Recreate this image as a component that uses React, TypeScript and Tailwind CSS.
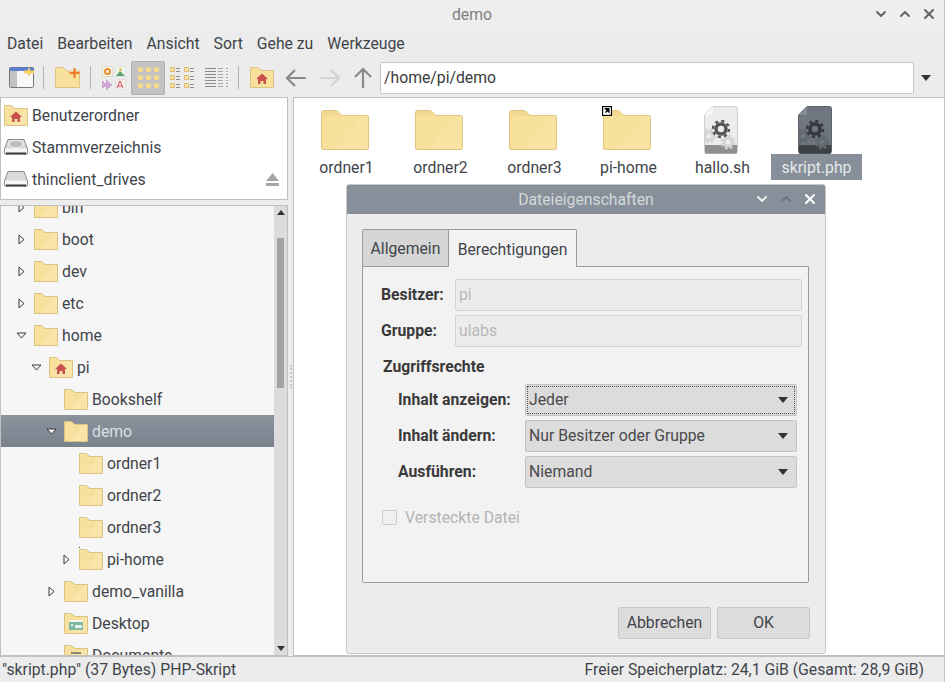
import { ChevronDown, ChevronUp, X } from "lucide-react";

const font = "font-['Roboto',sans-serif]";

function Folder({ className = "w-12 h-10" }: { className?: string }) {
  return (
    <svg viewBox="0 0 48 40" className={className}>
      <path d="M.5 6 V2.500 Q.5 .5 2.500 .5 H14 Q16 .5 18 2.500 L21 5.500 H46 Q47.500 5.500 47.500 7 V38 Q47.500 39.500 46 39.500 H2 Q.5 39.500 .5 38 Z" fill="#f6e09a" stroke="#e0c584" />
      <path d="M1 5.500 V2.500 Q1 1 2.500 1 H14 L20 5.500 Z" fill="#f1d88e" />
      <path d="M12 39 L42 6 H47 V38 Q47 39 46 39 Z" fill="#f8e3a2" />
    </svg>
  );
}

function TreeFolder({ kind }: { kind?: string }) {
  return (
    <svg viewBox="0 0 24 21" className="h-[21px] w-6 shrink-0 overflow-visible">
      <path d="M.5 .5 H7 L11 3.500 H23.500 V20.500 H.5 Z" fill="#f7e19c" stroke="#dcc285" />
      <path d="M6 20 L20 4 H23 V20 Z" fill="#f9e5a9" />
      {kind === "home" && <path d="M12 6.500 L18 12 H16 V17 H13.500 V14 H10.500 V17 H8 V12 H6 Z" fill="#c9504f" />}
      {kind === "link" && <rect x="0" y="-2" width="1" height="1" fill="#444" />}
      {kind === "desktop" && (
        <g>
          <rect x="5" y="7" width="14" height="10" fill="#f4f4f0" />
          <rect x="5" y="9" width="14" height="8" fill="#7fb8a0" />
          <rect x="11" y="12" width="7" height="3" fill="#e8f0ec" />
          <rect x="7" y="11" width="2" height="2" fill="#e8f0ec" />
        </g>
      )}
      {kind === "docs" && (
        <g fill="#8a8a7a">
          <rect x="7" y="7" width="10" height="2" />
          <rect x="7" y="11" width="10" height="2" />
        </g>
      )}
    </svg>
  );
}

function DocIcon({ dark }: { dark?: boolean }) {
  const body = dark ? "#6f7680" : "#ececec";
  const edge = dark ? "#5d636b" : "#cfcfcf";
  const gear = dark ? "#34373c" : "#555555";
  const soft = dark ? "#62686f" : "#d4d4d4";
  const band = dark ? "#3d4045" : "#8f8f8f";
  return (
    <svg viewBox="0 0 34 48" className="h-12 w-[34px]">
      <path d="M.5 9 L9 .5 H31.500 Q33.500 .5 33.500 2.500 V45 Q33.500 47.500 31 47.500 H3 Q.5 47.500 .5 45 Z" fill={body} stroke={edge} />
      <path d="M1 9 L9 1 V9 Z" fill={dark ? "#868c94" : "#f8f8f8"} />
      <rect x="1" y="39" width="32" height="8.500" fill={band} />
      <circle cx="5" cy="30" r="4" fill="none" stroke={soft} strokeWidth="3" />
      <circle cx="5" cy="30" r="6.500" fill="none" stroke={soft} strokeWidth="2" strokeDasharray="3 2.100" />
      <circle cx="24" cy="36" r="4" fill="none" stroke={soft} strokeWidth="3" />
      <circle cx="24" cy="36" r="6.500" fill="none" stroke={soft} strokeWidth="2" strokeDasharray="3 2.100" />
      <circle cx="17" cy="23" r="5" fill="none" stroke={gear} strokeWidth="3.500" />
      <circle cx="17" cy="23" r="8" fill="none" stroke={gear} strokeWidth="2.500" strokeDasharray="3.100 3.180" />
    </svg>
  );
}

function Disk({ lined }: { lined?: boolean }) {
  return (
    <svg viewBox="0 0 24 18" className="h-[18px] w-6">
      <path d="M4 1.500 H20 L23.500 11 V15 Q23.500 16.500 22 16.500 H2 Q.5 16.500 .5 15 V11 Z" fill="#dadada" stroke="#8a8a8a" />
      <rect x="1" y="10.500" width="22" height="4" fill="#f6f6f6" />
      <rect x="2" y="14.500" width="20" height="1.500" fill="#3c3c3c" />
      {lined && <ellipse cx="12" cy="6" rx="7" ry="3.500" fill="#bcbcbc" stroke="#eeeeee" />}
    </svg>
  );
}

function Triangle({ dir, selected }: { dir: "right" | "down"; selected?: boolean }) {
  return dir === "right" ? (
    <svg viewBox="0 0 7 11" className="h-[11px] w-[7px]">
      <path d="M1 1 L6 5.500 L1 10 Z" fill="#f6f6f6" stroke="#3a3a3a" />
    </svg>
  ) : (
    <svg viewBox="0 0 11 7" className="h-[7px] w-[11px]">
      <path d="M1 1 H10 L5.500 6 Z" fill={selected ? "#ffffff" : "#f6f6f6"} stroke={selected ? "#33373c" : "#3a3a3a"} />
    </svg>
  );
}

function ToolIcons({ name }: { name: string }) {
  if (name === "panel") {
    return (
      <svg viewBox="0 0 25 21" className="h-[21px] w-[25px]">
        <rect x=".5" y=".5" width="24" height="20" rx="1" fill="#f8f8f8" stroke="#777" />
        <rect x="1" y="1" width="7" height="19" fill="#c4c4c4" />
        <rect x=".5" y=".5" width="24" height="3.500" fill="#5a7fd0" />
        <path d="M20 0 L21.500 3.500 H25 V6.500 H21.500 L20 10 L18.500 6.500 H15 V3.500 H18.500 Z" fill="#f5d263" />
      </svg>
    );
  }
  if (name === "newfolder") {
    return (
      <svg viewBox="0 0 25 21" className="h-[21px] w-[25px]">
        <path d="M.5 .5 H8 L12 4 H24.500 V20.500 H.5 Z" fill="#f7e19c" stroke="#dcc285" />
        <path d="M18.500 1 H20.500 V5 H24.500 V7 H20.500 V11 H18.500 V7 H14.500 V5 H18.500 Z" fill="#ea7d27" />
      </svg>
    );
  }
  if (name === "thumbs") {
    return (
      <svg viewBox="0 0 24 24" className="h-6 w-6">
        <rect x=".5" y=".5" width="10" height="10" fill="#fdf6ea" stroke="#e3d8c8" />
        <circle cx="5.500" cy="5.500" r="3.500" fill="#e98a2c" />
        <circle cx="5.500" cy="5.500" r="1.500" fill="#fff" />
        <rect x="13.500" y=".5" width="10" height="10" fill="#eef5ee" stroke="#dde5dd" />
        <path d="M14 10 L18 5 L23 10 Z" fill="#5da36e" />
        <circle cx="18.500" cy="3.500" r="1.500" fill="#e8c04c" />
        <path d="M1 15 V22 M3 17 V21 M5 14 V24 M7 16 V22 M9 18 V20" stroke="#b560b8" strokeWidth="1" />
        <rect x="13.500" y="13.500" width="10" height="10" fill="#fbf0f0" stroke="#e8dcdc" />
        <path d="M15 22 L18 15 L21 22 M16 20 H20" stroke="#d25050" fill="none" />
      </svg>
    );
  }
  if (name === "icons") {
    return (
      <svg viewBox="0 0 21 21" className="h-[21px] w-[21px]">
        {[0, 8, 16].map((y) =>
          [0, 8, 16].map((x) => (
            <path key={`${x}${y}`} d={`M${x} ${y} h2 l1 1 h2 v4 h-5 Z`} fill="#f3d98e" />
          )),
        )}
      </svg>
    );
  }
  if (name === "compact") {
    return (
      <svg viewBox="0 0 24 22" className="h-[22px] w-6">
        {[0, 8, 16].map((y) =>
          [0, 14].map((x) => (
            <g key={`${x}${y}`}>
              <rect x={x + 0.5} y={y + 0.5} width="4" height="4" fill="#f6e09a" stroke="#d9bf7c" />
              <rect x={x + 6} y={y + 1} width="4" height="1" fill="#8a8a8a" />
              <rect x={x + 6} y={y + 4} width="4" height="1" fill="#8a8a8a" />
            </g>
          )),
        )}
      </svg>
    );
  }
  return (
    <svg viewBox="0 0 23 22" className="h-[22px] w-[23px]">
      {[1, 4, 7, 10, 13, 16, 19].map((y) => (
        <g key={y} fill="#8a8a8a">
          <rect x="0" y={y} width="11" height="1" />
          <rect x="13" y={y} width="5" height="1" opacity=".7" />
          <rect x="21" y={y} width="2" height="1" opacity=".7" />
        </g>
      ))}
    </svg>
  );
}

function NavArrow({ rotate, color }: { rotate: string; color: string }) {
  return (
    <svg viewBox="0 0 24 24" className={`h-6 w-6 ${rotate}`}>
      <path d="M22 12 H3 M11 4 L3 12 L11 20" fill="none" stroke={color} strokeWidth="2.200" />
    </svg>
  );
}

function Separator() {
  return <div className="h-[23px] w-px shrink-0 bg-[#b4b4b4]" />;
}

const menu = ["Datei", "Bearbeiten", "Ansicht", "Sort", "Gehe zu", "Werkzeuge"];

const tree = [
  { label: "bin", pad: "pl-[33px]", arrow: "right", arrowX: "left-[17px]" },
  { label: "boot", pad: "pl-[33px]", arrow: "right", arrowX: "left-[17px]" },
  { label: "dev", pad: "pl-[33px]", arrow: "right", arrowX: "left-[17px]" },
  { label: "etc", pad: "pl-[33px]", arrow: "right", arrowX: "left-[17px]" },
  { label: "home", pad: "pl-[33px]", arrow: "down", arrowX: "left-[15px]" },
  { label: "pi", pad: "pl-[48px]", arrow: "down", arrowX: "left-[30px]", kind: "home" },
  { label: "Bookshelf", pad: "pl-[63px]" },
  { label: "demo", pad: "pl-[63px]", arrow: "down", arrowX: "left-[45px]", selected: true },
  { label: "ordner1", pad: "pl-[78px]" },
  { label: "ordner2", pad: "pl-[78px]" },
  { label: "ordner3", pad: "pl-[78px]" },
  { label: "pi-home", pad: "pl-[78px]", arrow: "right", arrowX: "left-[62px]", kind: "link" },
  { label: "demo_vanilla", pad: "pl-[63px]", arrow: "right", arrowX: "left-[47px]" },
  { label: "Desktop", pad: "pl-[63px]", kind: "desktop" },
  { label: "Documents", pad: "pl-[63px]", kind: "docs" },
];

function FileItem({ label, children, selected }: { label: string; children: React.ReactNode; selected?: boolean }) {
  return (
    <div className="flex w-[94px] flex-col items-center">
      <div className="flex h-12 items-center">{children}</div>
      <div className={`ml-[3px] flex h-[26px] items-center px-[11px] pt-px ${selected ? "bg-[#87909a] text-[#e6e8ea]" : "text-[#40444a]"}`}>{label}</div>
    </div>
  );
}

function Field({ label, value }: { label: string; value: string }) {
  return (
    <div className="flex h-8 items-center">
      <div className="w-[74px] font-bold text-[#3a3a3a]">{label}</div>
      <div className="flex h-8 w-[347px] items-center rounded-[2px] border border-[#d2d2d2] bg-[#ececec] px-[3px] text-[#b8b8b8]">{value}</div>
    </div>
  );
}

function Combo({ label, value, focused }: { label: string; value: string; focused?: boolean }) {
  return (
    <div className="flex h-8 items-center">
      <div className="w-[127px] font-bold text-[#3a3a3a]">{label}</div>
      <div className="relative flex h-8 w-[272px] items-center justify-between rounded-[2px] border border-[#c4c4c4] bg-[#dcdcdc] pl-[3px] pr-[8px] text-[#4a4a4a]">
        <span>{value}</span>
        <svg viewBox="0 0 10 6" className="h-[6px] w-[10px]">
          <path d="M0 0 H10 L5 6 Z" fill="#333" />
        </svg>
        {focused && <div className="absolute inset-[1px] border border-dotted border-[#555]" />}
      </div>
    </div>
  );
}

export default function App() {
  return (
    <div className={`${font} relative flex h-[682px] w-[945px] flex-col overflow-hidden border-r border-[#c4c4c4] bg-[#ececec] text-[15.75px] text-[#40444a]`}>
      <div className="relative flex h-[29px] shrink-0 items-center justify-center bg-[#eeeeee] text-[#7f7f7f]">
        demo
        <div className="absolute right-[7px] top-[6px] flex gap-2 text-[#666]">
          <ChevronDown size={16} strokeWidth={3} />
          <ChevronUp size={16} strokeWidth={3} />
          <X size={16} strokeWidth={3} />
        </div>
      </div>

      <div className="flex h-[29px] shrink-0 items-center gap-[14px] pl-[7px]">
        {menu.map((m) => (
          <span key={m}>{m}</span>
        ))}
      </div>

      <div className="flex h-[39px] shrink-0 items-center">
        <div className="ml-[9px] flex w-[34px]">
          <ToolIcons name="panel" />
        </div>
        <Separator />
        <div className="ml-[11px] flex w-[35px]">
          <ToolIcons name="newfolder" />
        </div>
        <Separator />
        <div className="ml-[11px] flex w-[29px]">
          <ToolIcons name="thumbs" />
        </div>
        <div className="flex h-[34px] w-[34px] items-center justify-center rounded-[2px] border border-[#b0b0b0] bg-[#c2c2c2]">
          <ToolIcons name="icons" />
        </div>
        <div className="ml-[5px] flex w-[35px]">
          <ToolIcons name="compact" />
        </div>
        <div className="flex w-[33px]">
          <ToolIcons name="list" />
        </div>
        <Separator />
        <div className="ml-[11px] flex w-[34px]">
          <svg viewBox="0 0 24 21" className="h-[21px] w-6">
            <path d="M.5 .5 H7 L11 3.500 H23.500 V20.500 H.5 Z" fill="#f7e19c" stroke="#dcc285" />
            <path d="M12 6.500 L18 12 H16 V17 H13.500 V14 H10.500 V17 H8 V12 H6 Z" fill="#c9504f" />
          </svg>
        </div>
        <div className="flex w-[34px]">
          <NavArrow rotate="" color="#8a8a8a" />
        </div>
        <div className="flex w-[33px]">
          <NavArrow rotate="rotate-180" color="#d2d2d2" />
        </div>
        <div className="flex w-[29px]">
          <NavArrow rotate="rotate-90" color="#8a8a8a" />
        </div>
        <div className="flex h-8 w-[534px] items-center rounded-[2px] border border-[#c6c6c6] bg-white pl-[3px] text-[#3a3a3a]">/home/pi/demo</div>
        <div className="ml-[7px]">
          <svg viewBox="0 0 10 6" className="h-[6px] w-[10px]">
            <path d="M0 0 H10 L5 6 Z" fill="#333" />
          </svg>
        </div>
      </div>

      <div className="flex min-h-0 flex-1 gap-0 border-b border-[#c0c0c0]">
        <div className="flex w-[288px] shrink-0 flex-col">
          <div className="h-[103px] shrink-0 border border-[#c0c0c0] bg-white pt-[1px]">
            <div className="flex h-8 items-center gap-[4px] pl-[3px]">
              <TreeFolder kind="home" />
              <span className="mt-[2px]">Benutzerordner</span>
            </div>
            <div className="flex h-8 items-center gap-[4px] pl-[3px]">
              <Disk lined />
              <span className="mt-[2px]">Stammverzeichnis</span>
            </div>
            <div className="flex h-8 items-center gap-[4px] pl-[3px]">
              <Disk />
              <span className="mt-[2px]">thinclient_drives</span>
              <svg viewBox="0 0 13 13" className="ml-[116px] h-[13px] w-[13px]">
                <path d="M6.500 0 L13 8 H0 Z M0 10 H13 V13 H0 Z" fill="#a6a6a6" />
              </svg>
            </div>
          </div>
          <div className="mt-[5px] flex min-h-0 flex-1 border border-[#c0c0c0] bg-[#f6f6f6]">
            <div className="min-h-0 w-[273px] overflow-hidden">
              <div className="-mt-[15px]">
                {tree.map((t) => (
                  <div
                    key={t.label}
                    className={`relative flex h-8 items-center gap-[4px] ${t.pad} ${t.selected ? "bg-gradient-to-b from-[#8b949d] to-[#7a838d] text-[#dde0e3]" : ""}`}
                  >
                    {t.arrow && (
                      <span className={`absolute flex ${t.arrowX}`}>
                        <Triangle dir={t.arrow as "right" | "down"} selected={t.selected} />
                      </span>
                    )}
                    <TreeFolder kind={t.kind} />
                    <span className="mt-[2px]">{t.label}</span>
                  </div>
                ))}
              </div>
            </div>
            <div className="flex w-[13px] shrink-0 flex-col items-center justify-between bg-[#dcdcdc] py-[4px]">
              <svg viewBox="0 0 8 5" className="h-[5px] w-2">
                <path d="M4 0 L8 5 H0 Z" fill="#333" />
              </svg>
              <div className="absolute top-[238px] h-[150px] w-[7px] bg-[#a2a2a2]" />
              <svg viewBox="0 0 8 5" className="h-[5px] w-2">
                <path d="M0 0 H8 L4 5 Z" fill="#333" />
              </svg>
            </div>
          </div>
        </div>

        <div className="flex w-[5px] shrink-0 items-center justify-center">
          <div className="h-[24px] border-l-2 border-dotted border-[#c8c8c8]" />
        </div>

        <div className="relative flex flex-1 items-start border border-r-0 border-[#c0c0c0] bg-white pl-[4px] pt-2">
          <FileItem label="ordner1">
            <Folder />
          </FileItem>
          <FileItem label="ordner2">
            <Folder />
          </FileItem>
          <FileItem label="ordner3">
            <Folder />
          </FileItem>
          <FileItem label="pi-home">
            <div className="relative flex">
              <Folder />
              <svg viewBox="0 0 10 10" className="absolute -top-[4px] -left-[1px] h-[10px] w-[10px]">
                <rect x=".5" y=".5" width="9" height="9" fill="#fff" stroke="#000" strokeWidth="1.300" />
                <path d="M2 2 H7.500 V7.500 L5.500 5.500 L4 7 L3 6 L4.500 4.500 Z" fill="#000" />
              </svg>
            </div>
          </FileItem>
          <FileItem label="hallo.sh">
            <DocIcon />
          </FileItem>
          <FileItem label="skript.php" selected>
            <DocIcon dark />
          </FileItem>
        </div>
      </div>

      <div className="flex h-[25px] shrink-0 items-center justify-between pl-[2px] pr-[20px]">
        <span>"skript.php" (37 Bytes) PHP-Skript</span>
        <span>Freier Speicherplatz: 24,1 GiB (Gesamt: 28,9 GiB)</span>
      </div>

      {/* floating properties window */}
      <div className="absolute left-[346px] top-[184px] flex h-[470px] w-[480px] flex-col overflow-hidden rounded-[3px] border border-[#c8c8c8] bg-[#ececec]">
        <div className="relative flex h-[29px] shrink-0 items-center justify-center bg-[#87909a] text-[#d4d8db]">
          Dateieigenschaften
          <div className="absolute right-[7px] top-[6px] flex gap-2">
            <ChevronDown size={16} strokeWidth={3} className="text-[#eeeeee]" />
            <ChevronUp size={16} strokeWidth={3} className="text-[#6d747c]" />
            <X size={16} strokeWidth={3} className="text-white" />
          </div>
        </div>
        <div className="flex flex-1 flex-col pl-[15px] pt-[15px]">
          <div className="z-10 flex h-[38px]">
            <div className="flex h-[37px] w-[87px] items-center justify-center rounded-tl-[2px] border border-b-0 border-[#9a9a9a] bg-[#d6d6d6] pt-[2px]">Allgemein</div>
            <div className="flex h-[38px] w-[128px] items-center justify-center rounded-tr-[2px] border border-b-0 border-l-0 border-[#9a9a9a] bg-[#f2f2f2] pt-[2px]">Berechtigungen</div>
          </div>
          <div className="-mt-px h-[317px] w-[447px] rounded-b-[2px] border border-[#9a9a9a] bg-[#f2f2f2] pl-[18px] pt-[12px]">
            <div className="flex flex-col gap-1">
              <Field label="Besitzer:" value="pi" />
              <Field label="Gruppe:" value="ulabs" />
            </div>
            <div className="ml-[2px] mt-2 font-bold text-[#3a3a3a]">Zugriffsrechte</div>
            <div className="ml-[17px] mt-[5px] flex flex-col gap-1">
              <Combo label="Inhalt anzeigen:" value="Jeder" focused />
              <Combo label="Inhalt ändern:" value="Nur Besitzer oder Gruppe" />
              <Combo label="Ausführen:" value="Niemand" />
            </div>
            <div className="ml-px mt-[18px] flex items-center gap-2 text-[#b4b4b4]">
              <div className="h-[15px] w-[15px] rounded-[2px] border border-[#cccccc] bg-[#f0f0f0]" />
              Versteckte Datei
            </div>
          </div>
          <div className="ml-[256px] mt-6 flex gap-[6px]">
            <div className="flex h-8 w-[93px] items-center justify-center rounded-[2px] border border-[#c8c8c8] bg-[#dcdcdc]">Abbrechen</div>
            <div className="flex h-8 w-[93px] items-center justify-center rounded-[2px] border border-[#c8c8c8] bg-[#dcdcdc]">OK</div>
          </div>
        </div>
      </div>
    </div>
  );
}
